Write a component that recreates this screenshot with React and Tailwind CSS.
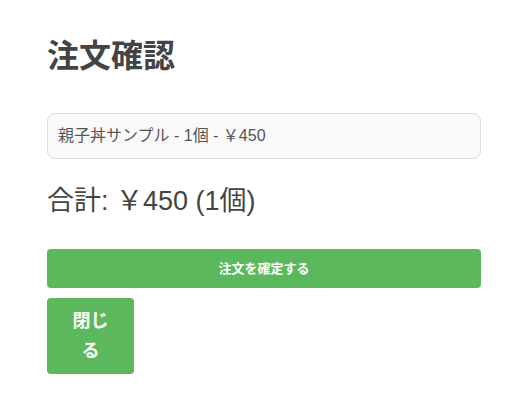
import React from "react";

const font = { fontFamily: '"Liberation Sans", "Noto Sans CJK JP", sans-serif' };

export default function App() {
  return (
    <div className="min-h-screen bg-white" style={font}>
      <div className="px-[47px] pt-[36px] w-[528px]">
        <h1 className="text-[32px] font-bold text-[#444] leading-[40px]">注文確認</h1>

        <div className="mt-[37px] h-[46px] flex items-center px-[10px] bg-[#f9f9f9] border border-[#ddd] rounded-[8px] text-[16px] text-[#555]">
          親子丼サンプル - 1個 - ￥450
        </div>

        <div className="mt-[24px] text-[27px] text-[#444] leading-[36px]">合計: ￥450 (1個)</div>

        <div className="mt-[30px] flex flex-col items-start gap-[10px]">
          <button className="w-full h-[39px] bg-[#5cb85c] text-white text-[13px] font-bold rounded-[4px]">
            注文を確定する
          </button>
          <button className="w-[87px] h-[76px] px-[24px] bg-[#5cb85c] text-white text-[18px] font-bold leading-[30px] rounded-[4px]">
            閉じる
          </button>
        </div>
      </div>
    </div>
  );
}
